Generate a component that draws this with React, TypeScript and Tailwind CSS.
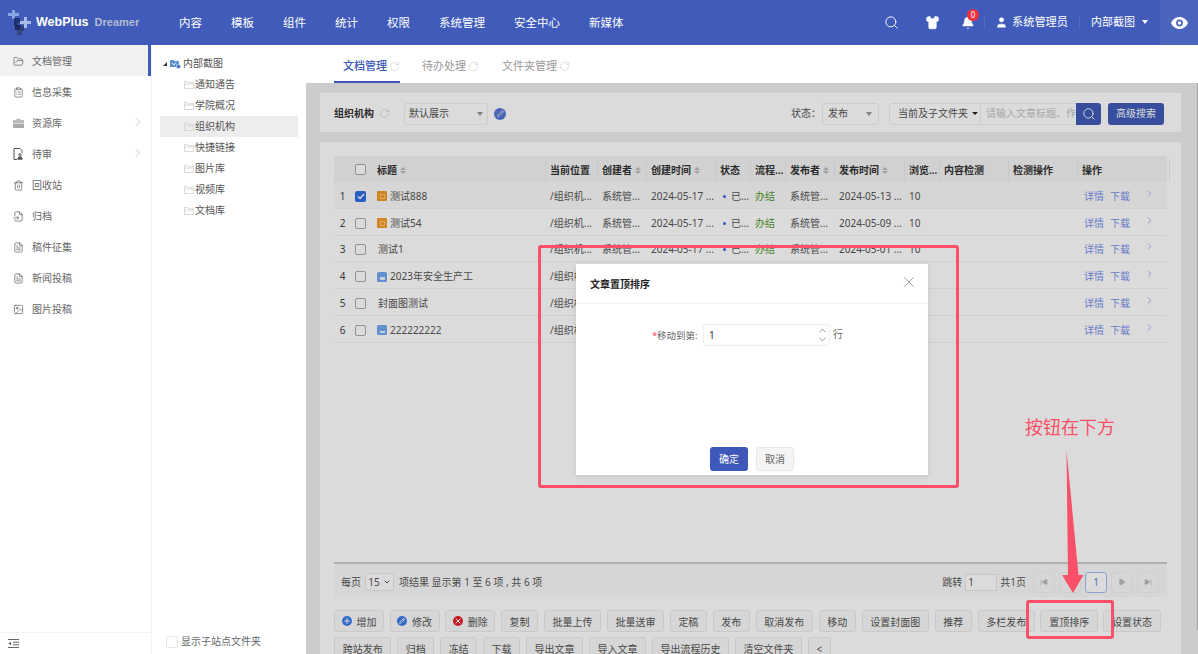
import {
  Bell,
  ChevronDown,
  ChevronRight,
  ChevronUp,
  ClipboardList,
  FileInput,
  FileText,
  FolderOpen,
  Image,
  Pencil,
  Play,
  Plus,
  RotateCw,
  Search,
  Shirt,
  SkipBack,
  SkipForward,
  Trash2,
  User,
  X,
} from "lucide-react";

const NAV = ["内容", "模板", "组件", "统计", "权限", "系统管理", "安全中心", "新媒体"];
const TREE = ["通知通告", "学院概况", "组织机构", "快捷链接", "图片库", "视频库", "文档库"];
const COLS = "grid grid-cols-[17px_22px_173px_52px_49px_69px_35px_35px_49px_70px_35px_69px_69px_92px]";

const ROWS = [
  { title: "测试888", icon: "orange", published: "2024-05-13 ...", checked: true },
  { title: "测试54", icon: "orange", published: "2024-05-09 ..." },
  { title: "测试1", published: "2024-05-01 ..." },
  { title: "2023年安全生产工", icon: "blue", published: "2024-04-28 ..." },
  { title: "封面图测试", published: "2024-04-26 ..." },
  { title: "222222222", icon: "blue", published: "2024-04-20 ..." },
];

const ACTIONS = [
  "增加", "修改", "删除", "复制", "批量上传", "批量送审", "定稿", "发布", "取消发布", "移动", "设置封面图",
  "推荐", "多栏发布", "置顶排序", "设置状态", "跨站发布", "归档", "冻结", "下载", "导出文章", "导入文章",
  "导出流程历史", "清空文件夹", "<",
];

function Logo() {
  return (
    <svg width="26" height="27" viewBox="0 0 26 27" className="shrink-0">
      <path d="M5 1h3v3h4v3H8v3H5V7H1V4h4z" fill="#86a6dc" />
      <path d="M17 8h3v4h4v3h-4v4h-3v-4h-4v-3h4z" fill="#a8c0e8" />
      <path d="M7 9h6v5h-2v3H7z" fill="#1f3470" />
      <path d="M8 16h6v5H8z" fill="#182a5e" />
      <path d="M13 17h4v5h-4z" fill="#2a3f7c" />
      <path d="M10 21h5v5h-5z" fill="#33467e" />
    </svg>
  );
}

function Eye() {
  return (
    <svg width="17" height="12" viewBox="0 0 17 12">
      <path d="M8.5 0C4.6 0 1.6 2.4 0 6c1.6 3.6 4.6 6 8.5 6S15.4 9.6 17 6C15.4 2.4 12.4 0 8.5 0z" fill="#fff" />
      <circle cx="8.5" cy="6" r="3.4" fill="#4b65bf" />
      <circle cx="8.5" cy="6" r="1.7" fill="#fff" />
    </svg>
  );
}

function Briefcase() {
  return (
    <svg width="11" height="10" viewBox="0 0 11 10">
      <path d="M3.5 2V.8h4V2H11v3H0V2z" fill="#bbb" />
      <path d="M0 5.6h11V10H0z" fill="#aaa" />
    </svg>
  );
}

function ReviewDoc() {
  return (
    <svg width="11" height="12" viewBox="0 0 11 12" fill="none" stroke="#555" strokeWidth="1">
      <path d="M4 11.5H1V.5h6l2 2v2.5" />
      <circle cx="7" cy="6.8" r="1.2" />
      <path d="M4.8 11.2c0-1.6 1-2.4 2.2-2.4s2.2.8 2.2 2.4z" fill="#555" />
    </svg>
  );
}

function TreeFolder() {
  return (
    <svg width="10" height="8" viewBox="0 0 10 8" fill="none" stroke="#d5d5d5" strokeWidth="0.9" className="shrink-0">
      <path d="M.5 7.5V.5h3l1 1.2h5v5.8z" />
      <path d="M.5 3h9" />
    </svg>
  );
}

function SiteIcon() {
  return (
    <svg width="11" height="10" viewBox="0 0 11 10" className="shrink-0">
      <path d="M0 1h3.5l1 1H9v6H0z" fill="#5f93cf" />
      <path d="M2 4l2 2 2-2.5" fill="none" stroke="#fff" strokeWidth="0.8" />
      <circle cx="8.5" cy="7.5" r="2.2" fill="#3f78bb" stroke="#fff" strokeWidth="0.6" />
    </svg>
  );
}

function DocBadge({ kind }: { kind: string }) {
  if (kind === "orange") {
    return (
      <span className="w-[10px] h-[10px] rounded-[1px] bg-[#f59a23] flex items-center justify-center shrink-0">
        <span className="w-[5px] h-[5px] border border-[#fcc98a]" />
      </span>
    );
  }
  return (
    <span className="w-[10px] h-[10px] rounded-[1.5px] bg-[#74a9f2] flex items-end justify-center pb-[2px] shrink-0">
      <span className="w-[5px] h-[2.5px] bg-[#e8f1fe]" />
    </span>
  );
}

function Sort() {
  return (
    <span className="inline-flex flex-col gap-[1px] ml-[3px] shrink-0">
      <span className="w-0 h-0 border-x-[3px] border-x-transparent border-b-[3px] border-b-[#bbb]" />
      <span className="w-0 h-0 border-x-[3px] border-x-transparent border-t-[3px] border-t-[#bbb]" />
    </span>
  );
}

function Caret() {
  return <span className="w-0 h-0 border-x-[3px] border-x-transparent border-t-[4px] border-t-[#999]" />;
}

function Refresh({ className }: { className?: string }) {
  return <RotateCw size={11} strokeWidth={1} color="#bbb" className={className} />;
}

function SideItem({ icon, label, active, more }: { icon: React.ReactNode; label: string; active?: boolean; more?: boolean }) {
  return (
    <div className={`h-[31px] flex items-center pl-[13px] pr-[6px] pt-[1px] text-[10px] text-[#666] ${active ? "bg-[#f2f2f2] border-r-[3px] border-r-[#405bb9]" : ""}`}>
      <span className="w-[19px] flex items-center">{icon}</span>
      <span className="flex-1">{label}</span>
      {more && <ChevronRight size={14} strokeWidth={1} color="#aaa" className="mb-[3px]" />}
    </div>
  );
}

function Head({ children, sort }: { children: React.ReactNode; sort?: boolean }) {
  return (
    <div className="px-[4px] flex items-center border-r border-r-[#ececec] font-semibold text-[#333] whitespace-nowrap overflow-hidden">
      {children}
      {sort && <Sort />}
    </div>
  );
}

function ActionButton({ label }: { label: string }) {
  const icon =
    label === "增加" ? (
      <span className="w-[10px] h-[10px] rounded-full bg-[#3f7de8] flex items-center justify-center">
        <Plus size={8} strokeWidth={3} color="#fff" />
      </span>
    ) : label === "修改" ? (
      <span className="w-[10px] h-[10px] rounded-full bg-[#3f7de8] flex items-center justify-center">
        <Pencil size={6} strokeWidth={3} color="#fff" />
      </span>
    ) : label === "删除" ? (
      <span className="w-[10px] h-[10px] rounded-full bg-[#e3202f] flex items-center justify-center">
        <X size={8} strokeWidth={3} color="#fff" />
      </span>
    ) : null;
  return (
    <button className={`h-[22px] rounded-[3px] border border-[#eaeaea] bg-[#fafafa] pt-[3px] text-[10px] text-[#555] flex items-center gap-[5px] ${icon ? "px-[6.5px]" : "px-[7.7px]"}`}>
      {icon && <span className="-mt-[3px]">{icon}</span>}
      {label}
    </button>
  );
}

function PageButton({ children, active }: { children: React.ReactNode; active?: boolean }) {
  return (
    <span className={`w-[22px] h-[21px] rounded-[3px] flex items-center justify-center text-[10px] ${active ? "border border-[#9dbcf5] text-[#5b84dc] bg-white" : "border border-[#f0f0f0] text-[#bbb]"}`}>
      {children}
    </span>
  );
}

export default function App() {
  return (
    <div className="relative h-[654px] w-[1198px] overflow-hidden bg-white font-['Noto_Sans','Noto_Sans_CJK_SC',sans-serif] text-[#555]">
      <header className="h-[45px] bg-[#405bb9] flex items-center text-white">
        <div className="w-[179px] flex items-center pl-[7px]">
          <Logo />
          <span className="ml-[3px] font-['Liberation_Sans',sans-serif] font-bold text-[12.5px]">WebPlus</span>
          <span className="ml-[6px] font-['Liberation_Sans',sans-serif] font-bold text-[11px] text-[#b3bbd3]">Dreamer</span>
        </div>
        <nav className="flex gap-[29px] text-[11.5px]">
          {NAV.map((n) => (
            <span key={n}>{n}</span>
          ))}
        </nav>
        <div className="flex-1" />
        <Search size={15} strokeWidth={1.5} />
        <Shirt size={15} fill="#fff" strokeWidth={1} className="ml-[26px]" />
        <span className="relative ml-[21px]">
          <Bell size={14} fill="#fff" strokeWidth={1} />
          <span className="absolute -top-[7px] left-[6px] w-[12px] h-[12px] rounded-full bg-[#f0323c] text-[8px] leading-[12px] text-center">0</span>
        </span>
        <span className="w-px h-[12px] bg-[#5069c2] ml-[9px]" />
        <User size={13} fill="#fff" strokeWidth={1} className="ml-[10px]" />
        <span className="ml-[4px] text-[11.2px]">系统管理员</span>
        <span className="w-px h-[12px] bg-[#5069c2] ml-[11px]" />
        <span className="ml-[11px] text-[11px]">内部截图</span>
        <span className="ml-[7px] mb-[2px] w-0 h-0 border-x-[3.5px] border-x-transparent border-t-[4px] border-t-white" />
        <div className="ml-[12px] w-[38px] h-full bg-[#4b65bf] flex items-center justify-center">
          <Eye />
        </div>
      </header>

      <div className="flex h-[609px]">
        <aside className="w-[152px] flex flex-col bg-white border-r border-r-[#f3f3f3]">
          <SideItem icon={<FolderOpen size={11} strokeWidth={1.3} color="#444" />} label="文档管理" active />
          <SideItem icon={<ClipboardList size={11} strokeWidth={1.3} color="#444" />} label="信息采集" />
          <SideItem icon={<Briefcase />} label="资源库" more />
          <SideItem icon={<ReviewDoc />} label="待审" more />
          <SideItem icon={<Trash2 size={11} strokeWidth={1.3} color="#444" />} label="回收站" />
          <SideItem icon={<FileInput size={11} strokeWidth={1.3} color="#444" />} label="归档" />
          <SideItem icon={<FileText size={11} strokeWidth={1.3} color="#444" />} label="稿件征集" />
          <SideItem icon={<FileText size={11} strokeWidth={1.3} color="#444" />} label="新闻投稿" />
          <SideItem icon={<Image size={11} strokeWidth={1.3} color="#444" />} label="图片投稿" />
          <div className="mt-auto h-[22px] border-t border-t-[#f3f3f3] pl-[8px] flex items-center">
            <svg width="11" height="9" viewBox="0 0 11 9" stroke="#555" strokeWidth="0.9">
              <path d="M0 .5h11M5 3.2h6M5 5.8h6M0 8.5h11" />
              <path d="M3 2.8v3.4L.5 4.5z" fill="#555" stroke="none" />
            </svg>
          </div>
        </aside>

        <div className="w-[154px] flex flex-col bg-white pl-[8px] pr-[8px] pt-[8px] pb-[5px] text-[10px] shadow-[1px_0_2px_rgba(0,0,0,0.03)]">
          <div className="h-[21px] flex items-center pl-[3px] gap-[3px]">
            <span className="w-0 h-0 border-l-[4px] border-l-transparent border-b-[4px] border-b-[#333]" />
            <SiteIcon />
            <span className="-ml-px">内部截图</span>
          </div>
          {TREE.map((t) => (
            <div key={t} className={`h-[21px] flex items-center pl-[24px] gap-[1px] ${t === "组织机构" ? "bg-[#ededed]" : ""}`}>
              <TreeFolder />
              <span>{t}</span>
            </div>
          ))}
          <div className="mt-auto flex items-center gap-[3px] pl-[6px]">
            <span className="w-[12px] h-[12px] rounded-[2px] border border-[#e5e5e5]" />
            <span className="text-[#666]">显示子站点文件夹</span>
          </div>
        </div>

        <main className="flex-1 flex flex-col min-w-0">
          <div className="h-[38px] flex items-end pl-[28px] gap-[22px] text-[11px] bg-white">
            <div className="h-full w-[66px] flex items-center pl-[9px] gap-[2px] pt-[6px] border-b-2 border-b-[#3d58b8] font-medium text-[#3d58b8] whitespace-nowrap">
              文档管理
              <Refresh />
            </div>
            <div className="h-full flex items-center gap-[2px] pt-[5px] text-[#999]">
              待办处理
              <Refresh />
            </div>
            <div className="h-full flex items-center gap-[2px] pt-[5px] pl-[1px] text-[#999]">
              文件夹管理
              <Refresh />
            </div>
          </div>

          <div className="relative flex-1 bg-[#eeeeee] pl-[14px] pr-[17px] pt-[10px] overflow-hidden">
            <div className="h-[39px] bg-white flex items-center pl-[14px] pr-[17px] pt-[2px] text-[10px]">
              <span className="font-semibold text-[#333]">组织机构</span>
              <Refresh className="ml-[5px]" />
              <div className="ml-[14px] w-[84px] h-[22px] rounded-[3px] border border-[#eee] flex items-center justify-between px-[4px]">
                <span>默认展示</span>
                <Caret />
              </div>
              <span className="ml-[6px] w-[12px] h-[12px] rounded-full bg-[#5874d4] flex items-center justify-center">
                <Pencil size={7} color="#fff" strokeWidth={2} />
              </span>
              <div className="flex-1" />
              <span>状态：</span>
              <div className="ml-[1px] w-[57px] h-[22px] rounded-[3px] border border-[#eee] flex items-center justify-between px-[5px] pr-[6px]">
                <span>发布</span>
                <Caret />
              </div>
              <div className="ml-[10px] h-[22px] flex items-stretch">
                <div className="w-[92px] rounded-l-[3px] border border-[#eee] flex items-center pl-[8px] gap-[4px] whitespace-nowrap">
                  <span>当前及子文件夹</span>
                  <span className="w-0 h-0 border-x-[3px] border-x-transparent border-t-[3px] border-t-[#222] shrink-0" />
                </div>
                <div className="w-[95px] border-y border-y-[#eee] flex items-center pl-[5px] text-[#c4c4c4] whitespace-nowrap overflow-hidden">请输入文章标题、作者</div>
                <div className="w-[25px] rounded-r-[3px] bg-[#405bb9] flex items-center justify-center">
                  <Search size={14} color="#fff" strokeWidth={1.6} />
                </div>
              </div>
              <button className="ml-[7px] w-[56px] h-[22px] rounded-[3px] bg-[#405bb9] text-white text-[10px]">高级搜索</button>
            </div>

            <div className="mt-[10px] h-[520px] bg-white px-[14px] pt-[14px] text-[10px]">
              <div className="h-[407px]">
                <div className={`${COLS} h-[26px] pt-[3px] bg-[#f4f4f4]`}>
                  <div />
                  <div className="flex items-center pl-[4px] -mt-[3px]">
                    <span className="w-[11px] h-[11px] rounded-[2px] border border-[#aaa] bg-white" />
                  </div>
                  <Head sort>标题</Head>
                  <Head>当前位置</Head>
                  <Head sort>创建者</Head>
                  <Head sort>创建时间</Head>
                  <Head>状态</Head>
                  <Head>流程...</Head>
                  <Head sort>发布者</Head>
                  <Head sort>发布时间</Head>
                  <Head>浏览...</Head>
                  <Head>内容检测</Head>
                  <Head>检测操作</Head>
                  <Head>操作</Head>
                </div>
                {ROWS.map((r, i) => (
                  <div key={r.title} className={`${COLS} h-[26.8px] pt-[3px] items-center border-b border-b-[#f3f3f3] whitespace-nowrap ${r.checked ? "bg-[#fafafa]" : ""}`}>
                    <span className="text-center text-[#444]">{i + 1}</span>
                    <div className="flex items-center pl-[4px]">
                      {r.checked ? (
                        <span className="w-[11px] h-[11px] rounded-[2px] bg-[#2f6fe6] flex items-center justify-center">
                          <svg width="8" height="7" viewBox="0 0 8 7" fill="none" stroke="#fff" strokeWidth="1.4">
                            <path d="M1 3.5l2 2 4-4.5" />
                          </svg>
                        </span>
                      ) : (
                        <span className="w-[11px] h-[11px] rounded-[2px] border border-[#aaa] bg-white" />
                      )}
                    </div>
                    <div className="flex items-center gap-[3px] px-[4px]">
                      {r.icon && <DocBadge kind={r.icon} />}
                      <span className={r.icon ? "" : "pl-[1px]"}>{r.title}</span>
                    </div>
                    <span className="px-[4px]">/组织机...</span>
                    <span className="px-[4px]">系统管...</span>
                    <span className="px-[4px]">2024-05-17 ...</span>
                    <span className="pl-[7px] flex items-center gap-[5px]">
                      <span className="w-[3px] h-[3px] rounded-full bg-[#3c62e0]" />
                      已...
                    </span>
                    <span className="px-[4px] text-[#4f9a2c]">办结</span>
                    <span className="px-[4px]">系统管...</span>
                    <span className="px-[4px]">{r.published}</span>
                    <span className="px-[4px]">10</span>
                    <span />
                    <span />
                    <div className="flex items-center pl-[6px] text-[#7a90ea]">
                      <span>详情</span>
                      <span className="ml-[6px]">下载</span>
                      <ChevronRight size={11} strokeWidth={1.5} className="ml-[14px] mb-[6px]" />
                    </div>
                  </div>
                ))}
              </div>

              <div className="h-[35px] bg-[#fafafa] border-t-2 border-t-[#cccccc] flex items-center px-[7px] pt-[3px] -mt-px">
                <span>每页</span>
                <span className="ml-[4px] w-[29px] h-[18px] rounded-[2px] border border-[#e8e8e8] bg-white flex items-center justify-center gap-[3px] text-[10px]">
                  15
                  <ChevronDown size={8} strokeWidth={2.5} color="#333" />
                </span>
                <span className="ml-[5px]">项结果 显示第 1 至 6 项 , 共 6 项</span>
                <div className="flex-1" />
                <span>跳转</span>
                <span className="ml-[3px] w-[32px] h-[17px] border border-[#e8e8e8] bg-white pl-[2px] text-[10px] leading-[15px]">1</span>
                <span className="ml-[3px]">共1页</span>
                <div className="ml-[7px] mr-[1px] flex gap-[4px]">
                  <PageButton><SkipBack size={8} fill="#bbb" /></PageButton>
                  <PageButton>
                    <Play size={8} fill="#bbb" className="rotate-180" />
                  </PageButton>
                  <PageButton active>1</PageButton>
                  <PageButton><Play size={8} fill="#bbb" /></PageButton>
                  <PageButton><SkipForward size={8} fill="#bbb" /></PageButton>
                </div>
              </div>

              <div className="mt-[13px] flex flex-wrap gap-x-[5.6px] gap-y-[5px]">
                {ACTIONS.map((a) => (
                  <ActionButton key={a} label={a} />
                ))}
              </div>
            </div>
            <div className="absolute right-0 top-0 h-[547px] w-px bg-[#bbbbbb]" />
            <div className="absolute inset-0 bg-black/[.14]" />
          </div>
        </main>
      </div>

      <div className="absolute left-[576px] top-[264px] w-[352px] h-[211px] bg-white flex flex-col shadow-[0_1px_6px_rgba(0,0,0,0.1)]">
        <div className="h-[40px] border-b border-b-[#f2f2f2] flex items-center justify-between pl-[14px] pr-[10px] pt-[2px]">
          <span className="text-[10px] font-semibold text-[#222]">文章置顶排序</span>
          <X size={18} strokeWidth={1} color="#888" className="mb-[5px]" />
        </div>
        <div className="flex-1 flex items-start pl-[76px] pt-[20px] text-[9.5px] text-[#666]">
          <div className="w-[51px] h-[22px] flex items-center whitespace-nowrap pt-[2px]">
            <span className="text-[#f5414f] w-[5px]">*</span>
            <span className="text-[9.5px]">移动到第:</span>
          </div>
          <div className="ml-0 w-[127px] h-[22px] rounded-[3px] border border-[#eee] flex items-center justify-between pl-[5px] pr-[1px] text-[10px] text-[#333]">
            <span>1</span>
            <span className="flex flex-col -space-y-[2px]">
              <ChevronUp size={11} strokeWidth={1.5} color="#666" />
              <ChevronDown size={11} strokeWidth={1.5} color="#666" />
            </span>
          </div>
          <span className="ml-[3px] mt-[3px] text-[10px]">行</span>
        </div>
        <div className="h-[28px] flex items-start justify-center gap-[8px]">
          <button className="w-[38px] h-[24px] rounded-[3px] bg-[#3d58b8] text-white text-[10px]">确定</button>
          <button className="w-[38px] h-[24px] rounded-[3px] border border-[#e8e8e8] bg-[#f5f5f5] text-[#666] text-[10px]">取消</button>
        </div>
      </div>

      <div className="absolute left-[538px] top-[245px] w-[421px] h-[243px] rounded-[3px] border-[3px] border-[#fb5068]" />
      <div className="absolute left-[1026px] top-[600px] w-[88px] h-[39px] rounded-[3px] border-[3px] border-[#fb5068]" />
      <span className="absolute left-[1025px] top-[414px] text-[18px] leading-[26px] text-[#fb5068] whitespace-nowrap">按钮在下方</span>
      <svg className="absolute left-[1060px] top-[450px]" width="25" height="145" viewBox="0 0 25 145">
        <path d="M6.5 0L8 125H2L13 143 23.5 125H18.5z" fill="#fb5068" />
      </svg>
    </div>
  );
}
